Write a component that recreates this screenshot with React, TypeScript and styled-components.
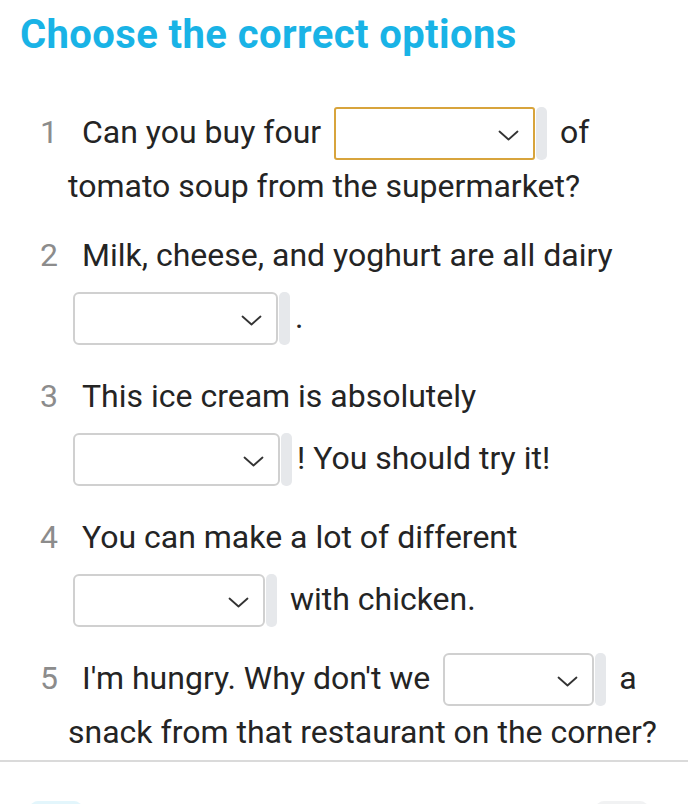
import React from "react";
import styled, { createGlobalStyle } from "styled-components";

const GlobalStyle = createGlobalStyle`
  html, body {
    margin: 0;
    padding: 0;
    background: #ffffff;
  }
  body {
    font-family: Roboto, "Liberation Sans", sans-serif;
    -webkit-font-smoothing: antialiased;
  }
`;

const Page = styled.div`
  width: 688px;
  padding-top: 15px;
  box-sizing: border-box;
`;

const Title = styled.h1`
  margin: 0 0 55px 0;
  padding-left: 20px;
  font-family: Roboto, "Liberation Sans", sans-serif;
  font-weight: 700;
  font-size: 40px;
  line-height: 40px;
  letter-spacing: 0.4px;
  color: #19b3e6;
`;

const List = styled.ol`
  list-style: none;
  margin: 0;
  padding: 0 16px 0 68px;
`;

const Item = styled.li`
  margin: 0 0 25px 0;
  text-indent: -28px;
  font-size: 32px;
  line-height: 44px;
  color: #242424;
  &:last-child {
    margin-bottom: 6px;
  }
`;

const Num = styled.span`
  display: inline-block;
  width: 42px;
  text-indent: 0;
  color: #8c8c8c;
`;

const Gap = styled.span<{ $wrapped?: boolean }>`
  display: inline-block;
  overflow: hidden;
  text-indent: 0;
  margin: ${(p) => (p.$wrapped ? "15px" : "-3px")} 5px 4px 5px;
  vertical-align: -21px;
`;

const GapRow = styled.span`
  display: flex;
  align-items: stretch;
  gap: 1px;
`;

const Select = styled.span<{ $w: number; $active?: boolean }>`
  position: relative;
  display: block;
  box-sizing: border-box;
  width: ${(p) => p.$w}px;
  height: 53px;
  background: #ffffff;
  border: 2px solid ${(p) => (p.$active ? "#d8a43c" : "#d0d0d0")};
  border-radius: ${(p) => (p.$active ? "3px" : "6px")};
`;

const Chevron = styled.svg`
  position: absolute;
  right: 14px;
  top: 50%;
  margin-top: -4px;
  width: 21px;
  height: 11px;
`;

const Bar = styled.span`
  display: block;
  width: 11px;
  height: 53px;
  background: #e6e8eb;
  border-radius: 5px;
`;

const Divider = styled.hr`
  margin: 0;
  border: none;
  height: 2px;
  background: #dadada;
`;

const Footer = styled.div`
  display: flex;
  justify-content: space-between;
  padding: 39px 40px 0 30px;
`;

const FooterButton = styled.div<{ $primary?: boolean }>`
  width: 52px;
  height: 44px;
  border-radius: 8px;
  background: ${(p) => (p.$primary ? "#e3f6fc" : "#f1f2f3")};
`;

function Blank({
  width,
  active,
  wrapped,
}: {
  width: number;
  active?: boolean;
  wrapped?: boolean;
}) {
  return (
    <Gap $wrapped={wrapped}>
      <GapRow>
        <Select $w={width} $active={active}>
          <Chevron viewBox="0 0 21 11" fill="none">
            <path
              d="M1.5 1.5 L10.5 9.5 L19.5 1.5"
              stroke="#333333"
              strokeWidth="1.8"
              strokeLinecap="round"
              strokeLinejoin="round"
            />
          </Chevron>
        </Select>
        <Bar />
      </GapRow>
    </Gap>
  );
}

export default function App() {
  return (
    <>
      <GlobalStyle />
      <Page>
        <Title>Choose the correct options</Title>
        <List>
          <Item>
            <Num>1</Num>Can you buy four <Blank width={201} active /> of tomato
            soup from the supermarket?
          </Item>
          <Item>
            <Num>2</Num>Milk, cheese, and yoghurt are all dairy{" "}
            <Blank width={205} wrapped />.
          </Item>
          <Item>
            <Num>3</Num>This ice cream is absolutely{" "}
            <Blank width={207} wrapped />! You should try it!
          </Item>
          <Item>
            <Num>4</Num>You can make a lot of different{" "}
            <Blank width={192} wrapped /> with chicken.
          </Item>
          <Item>
            <Num>5</Num>I'm hungry. Why don't we <Blank width={151} /> a snack
            from that restaurant on the corner?
          </Item>
        </List>
        <Divider />
        <Footer>
          <FooterButton $primary />
          <FooterButton />
        </Footer>
      </Page>
    </>
  );
}
